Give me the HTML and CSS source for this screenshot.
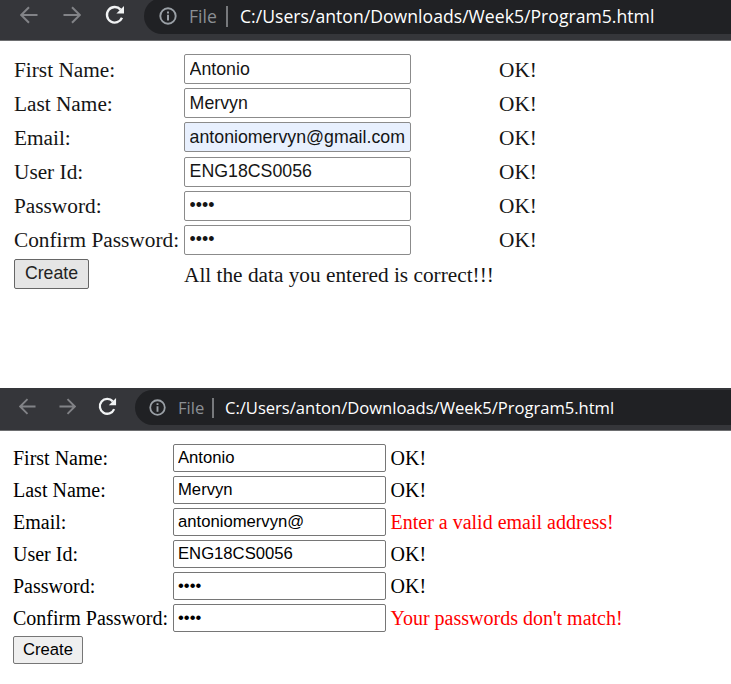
FILE: index.html
```
<!DOCTYPE html>
<html lang="en">
<head>
<meta charset="utf-8">
<title>Program5</title>
<link rel="stylesheet" href="styles.css">
</head>
<body>
<svg class="defs" aria-hidden="true">
  <symbol id="back" viewBox="0 0 18 18"><path d="M17.5 9H1.5M9 1.2L1.2 9 9 16.8" fill="none" stroke="currentColor" stroke-width="2"/></symbol>
  <symbol id="forward" viewBox="0 0 18 18"><path d="M.5 9h16M9 1.2L16.8 9 9 16.8" fill="none" stroke="currentColor" stroke-width="2"/></symbol>
  <symbol id="reload" viewBox="0 0 20 20"><path d="M17 12.8A7.8 7.8 0 1 1 15.6 4.6" fill="none" stroke="currentColor" stroke-width="2.4"/><path d="M19 1v7.6h-7.6z" fill="currentColor"/></symbol>
  <symbol id="info" viewBox="0 0 18 18"><circle cx="9" cy="9" r="7.7" fill="none" stroke="currentColor" stroke-width="1.9"/><path d="M9 4.4v2M9 7.8v5.8" stroke="currentColor" stroke-width="2"/></symbol>
</svg>

<section class="window valid">
  <header class="toolbar">
    <svg class="nav"><use href="#back"/></svg>
    <svg class="nav"><use href="#forward"/></svg>
    <svg class="reload"><use href="#reload"/></svg>
    <div class="address">
      <svg class="info"><use href="#info"/></svg>
      <span class="scheme">File</span><span class="divider"></span>
      <span class="url">C:/Users/anton/Downloads/Week5/Program5.html</span>
    </div>
  </header>
  <form class="form">
    <label>First Name:</label><input type="text" value="Antonio"><span class="msg">OK!</span>
    <label>Last Name:</label><input type="text" value="Mervyn"><span class="msg">OK!</span>
    <label>Email:</label><input class="autofill" type="text" value="antoniomervyn@gmail.com"><span class="msg">OK!</span>
    <label>User Id:</label><input type="text" value="ENG18CS0056"><span class="msg">OK!</span>
    <label>Password:</label><input type="text" value="••••"><span class="msg">OK!</span>
    <label>Confirm Password:</label><input type="text" value="••••"><span class="msg">OK!</span>
    <button type="button">Create</button><span class="result">All the data you entered is correct!!!</span>
  </form>
</section>

<section class="window invalid">
  <header class="toolbar">
    <svg class="nav"><use href="#back"/></svg>
    <svg class="nav"><use href="#forward"/></svg>
    <svg class="reload"><use href="#reload"/></svg>
    <div class="address">
      <svg class="info"><use href="#info"/></svg>
      <span class="scheme">File</span><span class="divider"></span>
      <span class="url">C:/Users/anton/Downloads/Week5/Program5.html</span>
    </div>
  </header>
  <form class="form">
    <label>First Name:</label><input type="text" value="Antonio"><span class="msg">OK!</span>
    <label>Last Name:</label><input type="text" value="Mervyn"><span class="msg">OK!</span>
    <label>Email:</label><input type="text" value="antoniomervyn@"><span class="msg error">Enter a valid email address!</span>
    <label>User Id:</label><input type="text" value="ENG18CS0056"><span class="msg">OK!</span>
    <label>Password:</label><input type="text" value="••••"><span class="msg">OK!</span>
    <label>Confirm Password:</label><input type="text" value="••••"><span class="msg error">Your passwords don't match!</span>
    <button type="button">Create</button>
  </form>
</section>
</body>
</html>
```
FILE: styles.css
```
* { box-sizing: border-box; }
body { margin: 0; background: #fff; overflow: hidden; font-family: "Liberation Serif", serif; }
.defs { display: none; }
.window { width: 731px; }
.valid { height: 388px; }
.invalid { height: 296px; }

.toolbar { display: flex; background: #35363a; border-bottom: 1px solid #6d6e70; overflow: hidden; }
.toolbar svg { flex: none; display: block; }
.nav { color: #828387; }
.reload { color: #f1f3f4; }
.address { flex: 1; display: flex; align-items: center; background: #202124; color: #fff; font-family: "Open Sans", "Noto Sans", sans-serif; white-space: nowrap; }
.info { color: #9aa0a6; }
.scheme { color: #8b8f94; }
.divider { width: 2px; background: #77797c; }

.valid .toolbar { height: 41px; padding-left: 20px; }
.valid .nav { width: 18px; height: 18px; margin: 6px 25px 0 0; }
.valid .reload { width: 20px; height: 20px; margin: 5px 19px 0 -1px; }
.valid .address { height: 36px; margin-top: -2px; padding-left: 15px; border-radius: 18px 0 0 18px; font-size: 17.6px; }
.valid .info { width: 18px; height: 18px; margin-right: 12px; }
.valid .scheme { width: 37px; }
.valid .divider { height: 21px; margin-right: 12px; }

.invalid .toolbar { height: 43px; padding-left: 19px; }
.invalid .nav { width: 17px; height: 17px; margin: 10px 23px 0 0; }
.invalid .reload { width: 19px; height: 19px; margin: 9px 18px 0 -1px; }
.invalid .address { height: 35px; margin-top: 2px; padding-left: 14px; border-radius: 18px 0 0 18px; font-size: 16.6px; }
.invalid .info { width: 17px; height: 17px; margin-right: 12px; }
.invalid .scheme { width: 34px; }
.invalid .divider { height: 20px; margin-right: 11px; }
.valid .url { letter-spacing: 0.02px; }
.invalid .url { letter-spacing: -0.02px; }

.form { display: grid; align-items: center; white-space: nowrap; }
.form input, .form button { margin: 0; border: 1px solid #767676; border-radius: 2px; font-family: "Liberation Sans", sans-serif; color: #000; background: #fff; outline: 0; }
.form button { background: #efefef; justify-self: start; padding: 0; }
.error { color: #f00; }

.valid .form { grid-template-columns: 170px 227px 88px auto; grid-auto-rows: 34.12px; padding: 12px 0 0 14px; font-size: 21.3px; color: #151515; }
.valid input { grid-column: 2; height: 30px; margin-bottom: 1.6px; padding: 0 4.6px; font-size: 17.75px; color: #151515; border-color: #8b8b8b; }
.valid .msg { grid-column: 4; }
.valid .autofill { background: #e8f0fe; }
.valid button { width: 75px; height: 30px; margin-bottom: 1.5px; font-size: 17.7px; padding-bottom: 1px; background: #e5e5e5; color: #222; border-color: #666; }
.valid .result { grid-column: 2 / 5; padding-top: 1px; }

.invalid .form { grid-template-columns: 160px 213px auto; grid-auto-rows: 32px; padding: 11px 0 0 13px; font-size: 20px; color: #000; }
.invalid input { height: 28px; padding: 0 4px 1px; font-size: 16.67px; }
.invalid .msg { padding-left: 4.5px; }
.invalid button { width: 70px; height: 28px; font-size: 16.67px; padding-bottom: 1px; }
```
